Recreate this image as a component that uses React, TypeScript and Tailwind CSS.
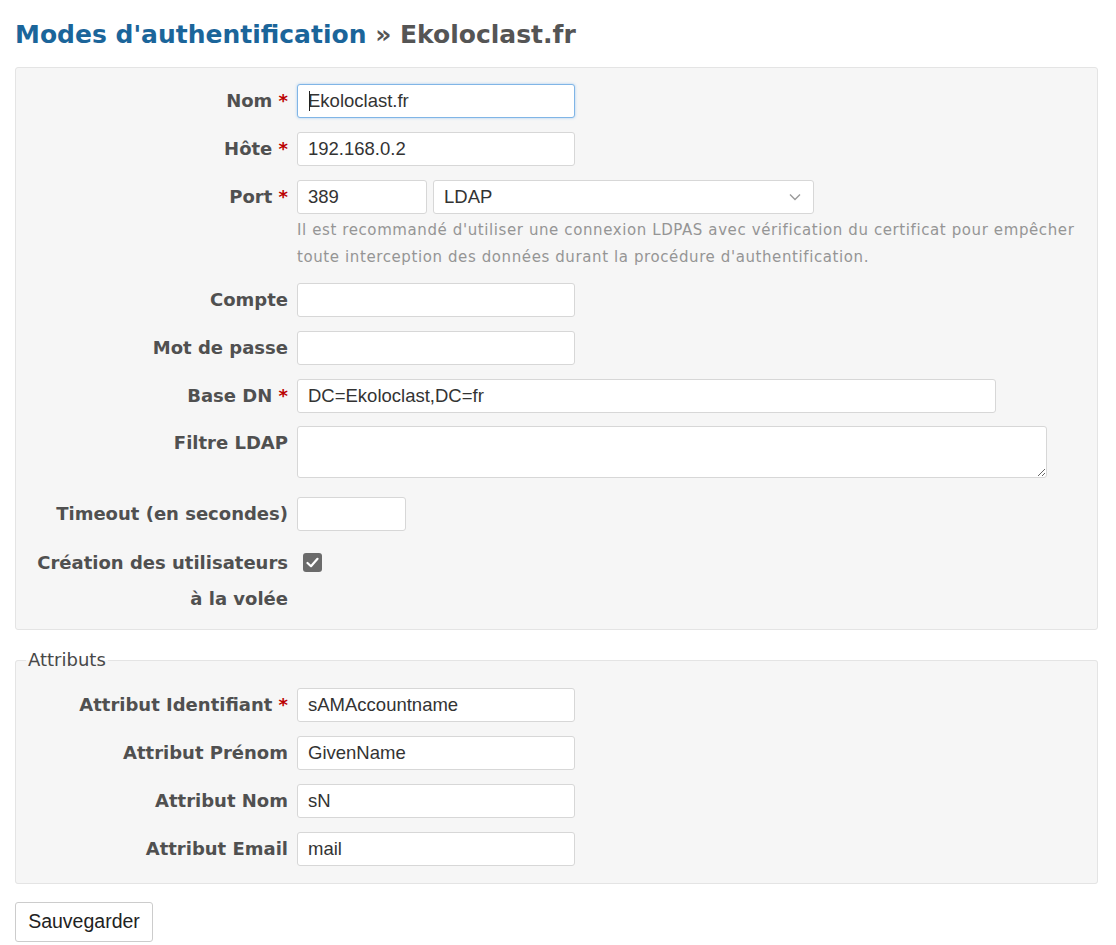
import { ReactNode } from "react";

const labelFont = { fontFamily: '"DejaVu Sans", Verdana, sans-serif' };
const inputFont = { fontFamily: '"Liberation Sans", Arial, sans-serif' };

function Star() {
  return <span className="text-[#bb0000]"> *</span>;
}

function Row({
  label,
  required,
  children,
  labelClass = "leading-[34px]",
  className = "",
}: {
  label: ReactNode;
  required?: boolean;
  children: ReactNode;
  labelClass?: string;
  className?: string;
}) {
  return (
    <div className={`flex gap-[9px] ${className}`}>
      <label
        className={`w-[272px] shrink-0 text-right text-[18px] font-bold text-[#505050] ${labelClass}`}
        style={labelFont}
      >
        {label}
        {required && <Star />}
      </label>
      <div className="min-w-0 flex-1">{children}</div>
    </div>
  );
}

function TextInput({
  value = "",
  width = "w-[278px]",
  focused = false,
}: {
  value?: string;
  width?: string;
  focused?: boolean;
}) {
  return (
    <div className="relative">
      <input
        readOnly
        defaultValue={value}
        style={inputFont}
        className={clsxLite(
          "block h-[34px] rounded-[3px] border bg-white px-[10px] text-[18.5px] text-[#333] outline-none",
          width,
          focused
            ? "border-[#80b5e6] shadow-[0_0_3px_#a8cdf0]"
            : "border-[#d7d7d7]",
        )}
      />
      {focused && (
        <span className="absolute left-[12px] top-[7px] h-[20px] w-px bg-[#222]" />
      )}
    </div>
  );
}

function clsxLite(...parts: string[]) {
  return parts.filter(Boolean).join(" ");
}

export default function App() {
  return (
    <div className="min-h-screen bg-white pl-[15px] pr-[18px] pt-[18px]">
      {/* Title */}
      <h2
        className="mb-[15px] text-[25px] font-bold leading-[34px] text-[#555]"
        style={labelFont}
      >
        <a className="text-[#1b659a]">Modes d'authentification</a> » Ekoloclast.fr
      </h2>

      {/* Main settings */}
      <div className="flex flex-col gap-[14px] rounded-[3px] border border-[#e4e4e4] bg-[#f6f6f6] pb-[12px] pt-[16px]">
        <Row label="Nom" required>
          <TextInput value="Ekoloclast.fr" focused />
        </Row>
        <Row label="Hôte" required>
          <TextInput value="192.168.0.2" />
        </Row>
        <Row label="Port" required>
          <div className="flex gap-[6px]">
            <TextInput value="389" width="w-[130px]" />
            <div
              className="flex h-[34px] w-[381px] items-center justify-between rounded-[3px] border border-[#d7d7d7] bg-white pl-[10px] pr-[12px] text-[18.5px] text-[#333]"
              style={inputFont}
            >
              <span>LDAP</span>
              <svg width="12" height="8" viewBox="0 0 12 8" fill="none">
                <polyline
                  points="1,1.5 6,6.5 11,1.5"
                  stroke="#9a9a9a"
                  strokeWidth="1.4"
                />
              </svg>
            </div>
          </div>
          <p
            className="mb-[-2px] mt-[3px] whitespace-nowrap text-[15px] leading-[27px] tracking-[0.6px] text-[#959595]"
            style={labelFont}
          >
            Il est recommandé d'utiliser une connexion LDPAS avec vérification du
            certificat pour empêcher
            <br />
            toute interception des données durant la procédure d'authentification.
          </p>
        </Row>
        <Row label="Compte">
          <TextInput />
        </Row>
        <Row label="Mot de passe">
          <TextInput />
        </Row>
        <Row label="Base DN" required>
          <TextInput value="DC=Ekoloclast,DC=fr" width="w-[699px]" />
        </Row>
        <Row label="Filtre LDAP" className="mt-[-1px]">
          <textarea
            readOnly
            className="block h-[52px] w-[750px] rounded-[3px] border border-[#d7d7d7] bg-white px-[10px] text-[18px] outline-none"
            style={inputFont}
          />
        </Row>
        <Row label="Timeout (en secondes)" className="mt-[5px]">
          <TextInput width="w-[109px]" />
        </Row>
        <Row
          label={
            <>
              Création des utilisateurs
              <br />à la volée
            </>
          }
          labelClass="leading-[36px]"
        >
          <div className="ml-[6px] mt-[8px] flex h-[19px] w-[19px] items-center justify-center rounded-[3px] bg-[#6b6b6b]">
            <svg width="13" height="11" viewBox="0 0 13 11" fill="none">
              <polyline
                points="1.5,6 5,9.2 11.5,1.8"
                stroke="#fff"
                strokeWidth="2.2"
                strokeLinecap="round"
                strokeLinejoin="round"
              />
            </svg>
          </div>
        </Row>
      </div>

      {/* Attributes */}
      <fieldset className="mt-[20px] rounded-[3px] border border-[#e4e4e4] bg-[#f6f6f6] pb-[17px] pt-[18px]">
        <legend
          className="ml-[10px] px-[2px] text-[18px] leading-[20px] text-[#484848]"
          style={labelFont}
        >
          Attributs
        </legend>
        <div className="flex flex-col gap-[14px]">
          <Row label="Attribut Identifiant" required>
            <TextInput value="sAMAccountname" />
          </Row>
          <Row label="Attribut Prénom">
            <TextInput value="GivenName" />
          </Row>
          <Row label="Attribut Nom">
            <TextInput value="sN" />
          </Row>
          <Row label="Attribut Email">
            <TextInput value="mail" />
          </Row>
        </div>
      </fieldset>

      <button
        className="mt-[18px] h-[40px] w-[138px] rounded-[3px] border border-[#cccccc] bg-white text-[19.5px] text-[#222]"
        style={inputFont}
      >
        Sauvegarder
      </button>
    </div>
  );
}
